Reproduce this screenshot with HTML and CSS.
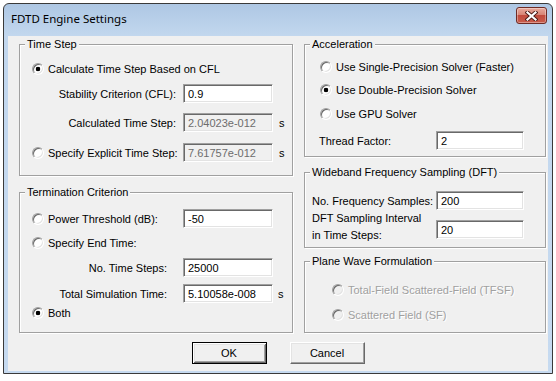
FILE: index.html
```html
<!DOCTYPE html>
<html lang="en">
<head>
    <meta charset="UTF-8">
    <title>FDTD Engine Settings</title>
    <link rel="stylesheet" href="styles.css">
</head>
<body>
    <div class="window">
        <div class="titlebar">
            <span class="title">FDTD Engine Settings</span>
            <button class="close" type="button" aria-label="Close">
                <svg width="13" height="10" viewBox="0 0 13 10">
                    <path d="M2.5 1.5 L10.5 8.5 M10.5 1.5 L2.5 8.5" stroke="#4a1a16" stroke-width="4" stroke-linecap="square" fill="none"/>
                    <path d="M2.5 1.5 L10.5 8.5 M10.5 1.5 L2.5 8.5" stroke="#fff" stroke-width="2.2" stroke-linecap="square" fill="none"/>
                </svg>
            </button>
        </div>

        <div class="client">
            <div class="columns">
                <div class="col-left">
                    <div class="group time-step">
                        <span class="group-title">Time Step</span>
                        <label class="row opt mt-14"><input type="radio" class="radio" name="ts" checked>Calculate Time Step Based on CFL</label>
                        <div class="row mt-6">
                            <span class="lbl">Stability Criterion (CFL):</span>
                            <input class="field" type="text" value="0.9">
                        </div>
                        <div class="row mt-10">
                            <span class="lbl">Calculated Time Step:</span>
                            <input class="field" type="text" value="2.04023e-012" disabled>
                            <span class="unit">s</span>
                        </div>
                        <div class="row mt-11">
                            <label class="lbl opt"><input type="radio" class="radio" name="ts">Specify Explicit Time Step:</label>
                            <input class="field" type="text" value="7.61757e-012" disabled>
                            <span class="unit">s</span>
                        </div>
                    </div>

                    <div class="group termination">
                        <span class="group-title">Termination Criterion</span>
                        <div class="row mt-16">
                            <label class="lbl opt"><input type="radio" class="radio" name="tc">Power Threshold (dB):</label>
                            <input class="field" type="text" value="-50">
                        </div>
                        <label class="row opt mt-5"><input type="radio" class="radio" name="tc">Specify End Time:</label>
                        <div class="row mt-6">
                            <span class="lbl">No. Time Steps:</span>
                            <input class="field" type="text" value="25000">
                        </div>
                        <div class="row mt-7">
                            <span class="lbl">Total Simulation Time:</span>
                            <input class="field" type="text" value="5.10058e-008">
                            <span class="unit">s</span>
                        </div>
                        <label class="row opt"><input type="radio" class="radio" name="tc" checked>Both</label>
                    </div>
                </div>

                <div class="col-right">
                    <div class="group acceleration">
                        <span class="group-title">Acceleration</span>
                        <label class="row opt mt-12"><input type="radio" class="radio" name="acc">Use Single-Precision Solver (Faster)</label>
                        <label class="row opt mt-4"><input type="radio" class="radio" name="acc" checked>Use Double-Precision Solver</label>
                        <label class="row opt mt-5"><input type="radio" class="radio" name="acc">Use GPU Solver</label>
                        <div class="row mt-8">
                            <span class="lbl">Thread Factor:</span>
                            <input class="field" type="text" value="2">
                        </div>
                    </div>

                    <div class="group wideband">
                        <span class="group-title">Wideband Frequency Sampling (DFT)</span>
                        <div class="row mt-18">
                            <span class="lbl">No. Frequency Samples:</span>
                            <input class="field" type="text" value="200">
                        </div>
                        <div class="row two-line">
                            <span class="lbl">DFT Sampling Interval<br>in Time Steps:</span>
                            <input class="field" type="text" value="20">
                        </div>
                    </div>

                    <div class="group plane-wave">
                        <span class="group-title">Plane Wave Formulation</span>
                        <label class="row opt mt-18 disabled"><input type="radio" class="radio" name="pw" disabled>Total-Field Scattered-Field (TFSF)</label>
                        <label class="row opt mt-6 disabled"><input type="radio" class="radio" name="pw" disabled>Scattered Field (SF)</label>
                    </div>
                </div>
            </div>

            <div class="actions">
                <button class="btn btn-default" type="button">OK</button>
                <button class="btn" type="button">Cancel</button>
            </div>
        </div>
    </div>
</body>
</html>
```

FILE: styles.css
```css
body {
    margin: 0;
    background: #fff;
    font-family: "Liberation Sans", Arial, sans-serif;
    font-size: 11px;
    color: #000;
}
.window {
    box-sizing: border-box;
    width: 550px;
    height: 371px;
    margin: 3px 0 0 3px;
    padding: 0 4px 2px 4px;
    border: 1px solid #3a3a3a;
    border-radius: 6px 6px 0 0;
    background: linear-gradient(to bottom, #aec7e4 0px, #c2d7ee 32px, #c6daf0 100%);
    display: flex;
    flex-direction: column;
}
.titlebar {
    height: 32px;
    display: flex;
    justify-content: space-between;
    align-items: flex-start;
}
.title {
    font-family: "Noto Sans", sans-serif;
    font-size: 11.5px;
    line-height: 16px;
    margin: 7px 0 0 3px;
    color: #000;
}
.close {
    box-sizing: border-box;
    width: 31px;
    height: 17px;
    margin: 3px 1px 0 0;
    padding: 0;
    border: 1px solid #6e2b25;
    border-radius: 3px;
    background: linear-gradient(to bottom, #e9aa9e 0%, #d88575 45%, #c24b3d 50%, #c95d4c 100%);
    box-shadow: inset 0 0 0 1px rgba(255, 255, 255, 0.35);
    display: flex;
    align-items: center;
    justify-content: center;
}
.close svg {
    display: block;
}
.client {
    flex: 1;
    background: #f0f0f0;
    padding-top: 8px;
}
.columns {
    display: flex;
    gap: 11px;
    padding-left: 11px;
}
.col-left {
    width: 274px;
    display: flex;
    flex-direction: column;
    gap: 16px;
}
.col-right {
    width: 242px;
    display: flex;
    flex-direction: column;
}
.group {
    position: relative;
    box-sizing: border-box;
    border: 1px solid #a0a0a0;
    box-shadow: 1px 1px 0 #fff, inset 1px 1px 0 #fff;
}
.group-title {
    position: absolute;
    top: -7px;
    left: 5px;
    padding: 0 2px;
    line-height: 13px;
    background: #f0f0f0;
}
.time-step { height: 132px; }
.termination { height: 141px; }
.acceleration { height: 113px; }
.wideband { height: 76px; margin-top: 15px; }
.plane-wave { height: 72px; margin-top: 13px; }

.row {
    display: flex;
    align-items: center;
    height: 19px;
    white-space: nowrap;
}
.mt-4 { margin-top: 4px; }
.mt-5 { margin-top: 5px; }
.mt-6 { margin-top: 6px; }
.mt-7 { margin-top: 7px; }
.mt-8 { margin-top: 8px; }
.mt-10 { margin-top: 10px; }
.mt-11 { margin-top: 11px; }
.mt-12 { margin-top: 12px; }
.mt-14 { margin-top: 14px; }
.mt-16 { margin-top: 16px; }
.mt-18 { margin-top: 18px; }

.lbl {
    box-sizing: border-box;
    flex: none;
    text-align: right;
}
.opt {
    display: flex;
    align-items: center;
    gap: 4px;
}
.time-step .lbl,
.termination .lbl {
    width: 163px;
    padding-right: 7px;
}
.termination .lbl {
    padding-right: 16px;
}
.time-step .opt,
.termination .opt {
    padding-left: 12px;
    text-align: left;
}
.acceleration .opt { padding-left: 15px; }
.plane-wave .opt { padding-left: 27px; }
.acceleration .lbl,
.wideband .lbl {
    width: 131px;
    text-align: left;
}
.acceleration .lbl { padding-left: 14px; }
.wideband .lbl { padding-left: 7px; }
.wideband .two-line {
    height: auto;
    align-items: flex-start;
}
.two-line .lbl {
    line-height: 17px;
}
.two-line .field {
    margin-top: 10px;
}

.field {
    box-sizing: border-box;
    width: 90px;
    height: 19px;
    margin: 0;
    padding: 0 0 0 4px;
    border: 1px solid;
    border-color: #a0a0a0 #fff #fff #a0a0a0;
    box-shadow: inset 1px 1px 0 #696969, inset -1px -1px 0 #e3e3e3;
    background: #fff;
    font: inherit;
    color: #000;
    outline: none;
}
.field:disabled {
    background: #f0f0f0;
    color: #6d6d6d;
}
.col-right .field {
    width: 88px;
}
.unit {
    margin-left: 6px;
}
.termination .unit {
    margin-left: 5px;
}

.radio {
    appearance: none;
    flex: none;
    box-sizing: border-box;
    width: 12px;
    height: 12px;
    margin: 0;
    border-radius: 50%;
    border: 1px solid;
    border-color: #a0a0a0 #fff #fff #a0a0a0;
    box-shadow: inset 1px 1px 0 #696969, inset -1px -1px 0 #e3e3e3;
    background: #fff;
}
.radio:checked {
    background: radial-gradient(circle, #000 0, #000 2px, #fff 2.6px);
}
.radio:disabled {
    background: #f0f0f0;
}
.disabled {
    color: #a0a0a0;
    text-shadow: 1px 1px 0 #fff;
}

.actions {
    display: flex;
    justify-content: center;
    gap: 23px;
    margin-top: 9px;
}
.btn {
    box-sizing: border-box;
    width: 75px;
    height: 22px;
    margin: 0;
    padding: 0;
    background: #f0f0f0;
    border: 1px solid;
    border-color: #fff #696969 #696969 #fff;
    box-shadow: inset -1px -1px 0 #a0a0a0, inset 1px 1px 0 #e3e3e3;
    font: inherit;
    color: #000;
}
.btn-default {
    border-color: #000;
    box-shadow: inset 1px 1px 0 #fff, inset -1px -1px 0 #696969, inset 2px 2px 0 #e3e3e3, inset -2px -2px 0 #a0a0a0;
}
```
